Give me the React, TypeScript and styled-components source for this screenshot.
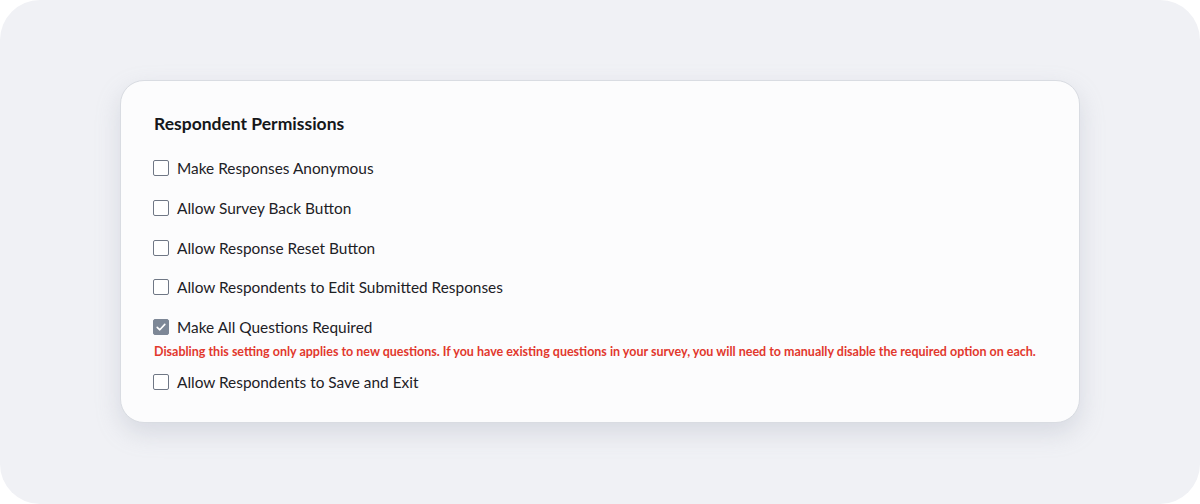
import styled, { createGlobalStyle } from "styled-components";

const GlobalStyle = createGlobalStyle`
  body {
    margin: 0;
    background: #ffffff;
    font-family: Lato, "Open Sans", sans-serif;
  }
`;

const options = [
  { label: "Make Responses Anonymous", checked: false },
  { label: "Allow Survey Back Button", checked: false },
  { label: "Allow Response Reset Button", checked: false },
  { label: "Allow Respondents to Edit Submitted Responses", checked: false },
  {
    label: "Make All Questions Required",
    checked: true,
    note: "Disabling this setting only applies to new questions. If you have existing questions in your survey, you will need to manually disable the required option on each.",
  },
  { label: "Allow Respondents to Save and Exit", checked: false },
];

const Frame = styled.div`
  width: 1200px;
  height: 504px;
  box-sizing: border-box;
  padding: 80px 120px;
  background: #f0f1f5;
  border-radius: 40px;
`;

const Card = styled.div`
  box-sizing: border-box;
  height: 343px;
  padding: 32px 32px 28px;
  background: #fcfcfd;
  border: 1px solid #d9dce2;
  border-radius: 24px;
  box-shadow: 0 10px 24px rgba(150, 158, 175, 0.28);
`;

const Title = styled.h2`
  margin: 0 0 21px 1px;
  font-size: 17.5px;
  line-height: 22px;
  font-weight: 700;
  color: #15171a;
`;

const List = styled.div`
  display: flex;
  flex-direction: column;
  gap: 15.75px;
`;

const Option = styled.div`
  display: flex;
  flex-direction: column;
`;

const Row = styled.label`
  display: flex;
  align-items: center;
  gap: 8px;
  height: 24px;
  font-size: 15.4px;
  color: #1d2126;
  cursor: pointer;
`;

const Box = styled.span<{ $checked: boolean }>`
  box-sizing: border-box;
  width: 16px;
  height: 16px;
  flex: none;
  display: flex;
  align-items: center;
  justify-content: center;
  border-radius: 2px;
  border: 1.5px solid ${(p) => (p.$checked ? "#7d8796" : "#6f7785")};
  background: ${(p) => (p.$checked ? "#7d8796" : "#ffffff")};
`;

const Note = styled.p`
  margin: 5px 0 -5.75px 1px;
  font-size: 12.5px;
  line-height: 16px;
  font-weight: 700;
  color: #e2382d;
`;

export default function App() {
  return (
    <>
      <GlobalStyle />
      <Frame>
        <Card>
          <Title>Respondent Permissions</Title>
          <List>
            {options.map((opt, i) => (
              <Option key={i}>
                <Row>
                  <Box $checked={opt.checked}>
                    {opt.checked && (
                      <svg width="12" height="12" viewBox="0 0 12 12">
                        <path
                          d="M2.2 6.3 4.8 8.8 9.8 3.4"
                          fill="none"
                          stroke="#ffffff"
                          strokeWidth="1.6"
                          strokeLinecap="round"
                          strokeLinejoin="round"
                        />
                      </svg>
                    )}
                  </Box>
                  {opt.label}
                </Row>
                {opt.note && <Note>{opt.note}</Note>}
              </Option>
            ))}
          </List>
        </Card>
      </Frame>
    </>
  );
}
